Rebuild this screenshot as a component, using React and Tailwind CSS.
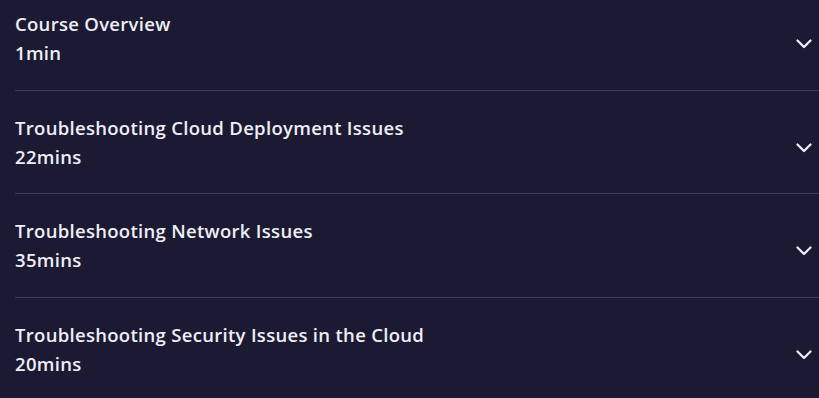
const modules = [
  { title: "Course Overview", length: "1min" },
  { title: "Troubleshooting Cloud Deployment Issues", length: "22mins" },
  { title: "Troubleshooting Network Issues", length: "35mins" },
  { title: "Troubleshooting Security Issues in the Cloud", length: "20mins" },
];

function Chevron() {
  return (
    <svg width="16" height="10" viewBox="0 0 16 10" fill="none" className="mt-[11px]">
      <path d="M1.5 1.5L8 8L14.5 1.5" stroke="#f2f2f8" strokeWidth="2.2" strokeLinecap="round" strokeLinejoin="round" />
    </svg>
  );
}

export default function App() {
  return (
    <div className="w-[819px] h-[398px] overflow-hidden bg-[#1c1a33] font-['Open_Sans',sans-serif]">
      <div className="-mt-[13px] pl-[15px]">
        {modules.map((m, i) => (
          <div
            key={m.title}
            className={`flex items-center justify-between pr-[7px] pt-[22px] ${i === 1 ? "pb-[22px]" : "pb-[23px]"} ${
              i < modules.length - 1 ? "border-b border-[#3c3866]" : ""
            }`}
          >
            <div className="text-[18.5px] leading-[29px] tracking-[0.3px] font-semibold text-[#eeeef6]">
              <div>{m.title}</div>
              <div>{m.length}</div>
            </div>
            <Chevron />
          </div>
        ))}
      </div>
    </div>
  );
}
